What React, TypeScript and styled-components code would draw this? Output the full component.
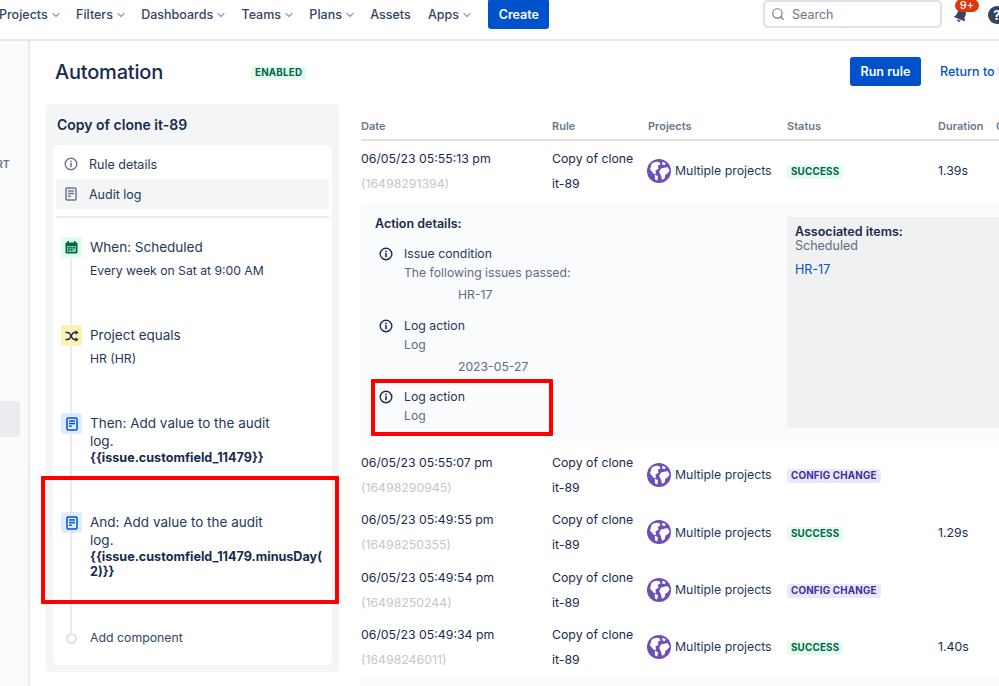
import React from 'react';
import styled, { createGlobalStyle } from 'styled-components';
import { ChevronDown, Search as SearchIcon } from 'lucide-react';

const GlobalStyle = createGlobalStyle`
  html, body {
    margin: 0;
    padding: 0;
    background: #fff;
  }
  body {
    width: 999px;
    height: 686px;
    overflow: hidden;
    font-family: Inter, "Liberation Sans", sans-serif;
    font-size: 12.5px;
    color: #172b4d;
  }
`;

// Header
const Page = styled.div`
  position: relative;
  width: 999px;
  height: 686px;
  overflow: hidden;
`;

const Header = styled.header`
  display: flex;
  align-items: flex-start;
  height: 39px;
  border-bottom: 2px solid #e6e8ee;
`;

const Nav = styled.nav`
  display: flex;
  align-items: flex-start;
  height: 29px;
  margin-left: -1px;
  gap: 17.3px;
`;

const NavItem = styled.div`
  display: flex;
  align-items: center;
  height: 28px;
  font-size: 12.5px;
  font-weight: 500;
  color: #344563;
  white-space: nowrap;

  svg {
    margin: 1px -3px 0 2px;
    color: #97a0af;
  }
`;

const Button = styled.button`
  height: 29px;
  padding: 0;
  border: 0;
  border-radius: 3px;
  background: #0052cc;
  color: #fff;
  font: 600 12.5px Inter, "Liberation Sans", sans-serif;
`;

const CreateButton = styled(Button)`
  width: 61px;
  height: 30px;
  margin: -1px 0 0 1px;
`;

const RunButton = styled(Button)`
  flex: none;
  width: 71px;
`;

const Search = styled.div`
  display: flex;
  align-items: center;
  gap: 7px;
  width: 179px;
  height: 28px;
  margin-left: auto;
  padding-left: 6px;
  box-sizing: border-box;
  border: 2px solid #dfe1e6;
  border-radius: 5px;
  color: #6b778c;
  font-size: 12.5px;
`;

const Bell = styled.div`
  position: relative;
  width: 20px;
  height: 24px;
  margin-left: 11px;

  svg {
    display: block;
    margin-top: 7px;
  }
`;

const BellBadge = styled.span`
  position: absolute;
  left: 2px;
  top: -1px;
  width: 24px;
  height: 13px;
  border-radius: 7px;
  background: #de350b;
  color: #fff;
  font-size: 11px;
  font-weight: 500;
  line-height: 13px;
  text-align: center;
`;

const Help = styled.div`
  flex: none;
  width: 18px;
  height: 18px;
  margin: 6px -7px 0 15px;
  border-radius: 50%;
  background: #344563;
  color: #fff;
  font-size: 13px;
  font-weight: 700;
  line-height: 18px;
  text-align: center;
`;

// Page frame
const Body = styled.div`
  display: flex;
  height: 645px;
`;

const Rail = styled.aside`
  flex: none;
  width: 28px;
  border-right: 2px solid #ebecf0;
  background: #fafbfc;
  overflow: hidden;
`;

const RailLabel = styled.div`
  margin: 118px 0 0 -4px;
  font-size: 10.5px;
  font-weight: 600;
  line-height: 12px;
  color: #6b778c;
`;

const RailSelected = styled.div`
  width: 20px;
  height: 36px;
  margin-top: 230px;
  border-radius: 0 3px 3px 0;
  background: #ebecf0;
`;

const Main = styled.main`
  flex: 1;
  min-width: 0;
`;

const TitleBar = styled.div`
  display: flex;
  align-items: center;
  height: 63px;
  padding: 0 0 0 25px;
`;

const Title = styled.h1`
  width: 196px;
  margin: -2px 0 0;
  font-size: 20px;
  font-weight: 500;
  letter-spacing: -0.2px;
`;

const Lozenge = styled.span<{ $kind?: 'success' | 'config' }>`
  display: inline-block;
  padding: 0 4px;
  border-radius: 3px;
  background: ${(p) => (p.$kind === 'config' ? '#eae6ff' : '#e3fcef')};
  color: ${(p) => (p.$kind === 'config' ? '#403294' : '#006644')};
  font-size: 9.8px;
  font-weight: 700;
  line-height: 14px;
  letter-spacing: 0.2px;
  white-space: nowrap;
`;

const TitleActions = styled.div`
  display: flex;
  align-items: center;
  flex: none;
  gap: 19px;
  width: 179px;
  margin: -2px -30px 0 auto;
`;

const ReturnLink = styled.a`
  color: #0052cc;
  font-size: 12.5px;
  font-weight: 500;
  white-space: nowrap;
`;

const Columns = styled.div`
  display: flex;
  padding-left: 16px;
`;

// Rule panel
const RulePanel = styled.section`
  flex: none;
  width: 293px;
  height: 568px;
  box-sizing: border-box;
  padding: 0 7px;
  border-radius: 5px;
  background: #f4f5f7;
`;

const RuleName = styled.h2`
  margin: 0;
  padding-left: 4px;
  font-size: 14px;
  font-weight: 600;
  line-height: 41px;
`;

const RuleCard = styled.div`
  height: 520px;
  box-sizing: border-box;
  padding: 4px 3px;
  border-radius: 6px;
  background: #fff;
`;

const MenuRow = styled.div<{ $selected?: boolean }>`
  display: flex;
  align-items: center;
  height: 30px;
  padding-left: 8px;
  gap: 11px;
  border-radius: 3px;
  background: ${(p) => (p.$selected ? '#f4f5f7' : 'transparent')};
  font-size: 12.5px;
  color: #253858;

  svg {
    flex: none;
  }
`;

const Divider = styled.div`
  height: 2px;
  margin-top: 7px;
  background: #ebecf0;
`;

const StepList = styled.div`
  position: relative;
  padding: 19px 0 0 5px;

  &::before {
    content: '';
    position: absolute;
    left: 14px;
    top: 30px;
    height: 385px;
    width: 2px;
    background: #ebecf0;
  }
`;

const Step = styled.div<{ $height: number }>`
  position: relative;
  display: flex;
  gap: 8px;
  height: ${(p) => p.$height}px;
`;

const StepIcon = styled.div<{ $bg: string }>`
  flex: none;
  display: flex;
  align-items: center;
  justify-content: center;
  width: 21px;
  height: 21px;
  border-radius: 3px;
  background: ${(p) => p.$bg};
`;

const StepText = styled.div`
  min-width: 0;
  width: 234px;
`;

const StepTitle = styled.div`
  max-width: 195px;
  padding-top: 1px;
  font-size: 13.5px;
  line-height: 18px;
  color: #253858;
`;

const StepSub = styled.div`
  margin-top: 6px;
  font-size: 12.2px;
  line-height: 18px;
  color: #253858;
`;

const StepCode = styled.div`
  font-size: 12.6px;
  font-weight: 700;
  line-height: 15px;
  line-break: anywhere;
`;

const AddDot = styled.div`
  flex: none;
  width: 7px;
  height: 7px;
  margin: 6px 5px 0 5px;
  border: 2px solid #dfe1e6;
  border-radius: 50%;
  background: #fff;
`;

const AddLabel = styled.div`
  font-size: 12.3px;
  line-height: 21px;
  color: #344563;
`;

// Audit table
const Table = styled.section`
  flex: none;
  width: 650px;
  margin-left: 22px;
`;

const cols = '191px 96px 139px 151px 58px 1fr';

const HeadRow = styled.div`
  display: grid;
  grid-template-columns: ${cols};
  height: 37px;
  box-sizing: border-box;
  padding-top: 15px;
  margin-bottom: 1px;
  border-bottom: 2px solid #dfe1e6;
  font-size: 11px;
  font-weight: 600;
  line-height: 14px;
  color: #6b778c;
`;

const Row = styled.div`
  display: grid;
  grid-template-columns: ${cols};
  align-items: center;
  height: 57.3px;
  font-size: 12.3px;
  line-height: 25px;
`;

const IdText = styled.div`
  color: #c1c7d0;
`;

const ProjectCell = styled.div`
  display: flex;
  align-items: center;
  gap: 4px;
  margin-left: -1px;
  white-space: nowrap;
  color: #253858;

  svg {
    flex: none;
  }
`;

const Details = styled.div`
  display: flex;
  height: 238px;
  margin: 4px 0 5px;
  background: #fafbfc;
`;

const DetailsLeft = styled.div`
  flex: none;
  width: 426px;
  box-sizing: border-box;
  padding: 13px 0 0 14px;
`;

const DetailsHead = styled.div`
  font-size: 12.5px;
  font-weight: 600;
  line-height: 16px;
  margin-bottom: 12px;
`;

const LogEntry = styled.div`
  display: flex;
  gap: 11px;
  height: 71.5px;
  padding-left: 4px;

  svg {
    flex: none;
    margin-top: 3px;
  }
`;

const LogTitle = styled.div`
  font-size: 12.3px;
  line-height: 20px;
  color: #253858;
`;

const LogSub = styled.div`
  font-size: 12.2px;
  line-height: 18px;
  color: #5e6c84;
`;

const LogValue = styled.div`
  margin: 3px 0 0 54px;
  font-size: 12.2px;
  line-height: 19px;
  color: #5e6c84;
`;

const Associated = styled.div`
  flex: 1;
  margin: 14px 0 13px;
  padding: 7px 8px;
  background: #f0f1f3;
`;

const AssocHead = styled.div`
  font-size: 12.5px;
  font-weight: 600;
  line-height: 15px;
`;

const AssocSub = styled.div`
  font-size: 12.5px;
  line-height: 13px;
  color: #5e6c84;
`;

const AssocLink = styled.a`
  display: block;
  margin-top: 10px;
  font-size: 12.5px;
  line-height: 16px;
  color: #0052cc;
`;

const NextDetails = styled.div`
  height: 14px;
  margin-top: 1px;
  background: #fafbfc;
`;

const Annotation = styled.div<{ $x: number; $y: number; $w: number; $h: number }>`
  position: absolute;
  left: ${(p) => p.$x}px;
  top: ${(p) => p.$y}px;
  width: ${(p) => p.$w}px;
  height: ${(p) => p.$h}px;
  box-sizing: border-box;
  border: 4px solid #fe0000;
  border-radius: 1px;
`;

// Icons
const InfoIcon = ({ color = '#172b4d' }: { color?: string }) => (
  <svg width="14" height="14" viewBox="0 0 14 14" fill="none">
    <circle cx="7" cy="7" r="5.8" stroke={color} strokeWidth="1.4" />
    <circle cx="7" cy="4.4" r="0.9" fill={color} />
    <rect x="6.2" y="6" width="1.6" height="4.2" rx="0.5" fill={color} />
  </svg>
);

const DocIcon = ({ color }: { color: string }) => (
  <svg width="14" height="14" viewBox="-1 0 14 14" fill="none">
    <rect x="1" y="1" width="10" height="12" rx="1" stroke={color} strokeWidth="1.5" />
    <rect x="3" y="3.2" width="6" height="1.5" fill={color} />
    <rect x="3" y="5.8" width="6" height="1.5" fill={color} />
    <rect x="3" y="8.4" width="2.8" height="1.5" fill={color} />
  </svg>
);

const CalendarIcon = () => (
  <svg width="13" height="13" viewBox="0 0 13 13">
    <rect x="2.4" y="0" width="1.6" height="3" fill="#006644" />
    <rect x="9" y="0" width="1.6" height="3" fill="#006644" />
    <rect x="0.5" y="1.5" width="12" height="11" rx="1" fill="#006644" />
    <rect x="2" y="5" width="9" height="6" fill="#79c7a4" />
    <rect x="3" y="6" width="1.8" height="1.5" fill="#006644" />
    <rect x="5.6" y="6" width="1.8" height="1.5" fill="#006644" />
    <rect x="8.2" y="6" width="1.8" height="1.5" fill="#006644" />
    <rect x="3" y="8.3" width="1.8" height="1.5" fill="#006644" />
    <rect x="5.6" y="8.3" width="1.8" height="1.5" fill="#006644" />
  </svg>
);

const BranchIcon = () => (
  <svg width="14" height="12" viewBox="0 0 14 12" fill="none">
    <path d="M0.5 2.5h2.600c2.600 0 3.400 7 6 7h2" stroke="#172b4d" strokeWidth="1.4" />
    <path d="M0.5 9.5h2.600c2.600 0 3.400-7 6-7h2" stroke="#172b4d" strokeWidth="1.4" />
    <path d="M10.5 0.2l3 2.300-3 2.300zM10.5 7.2l3 2.300-3 2.300z" fill="#172b4d" />
  </svg>
);

const BellIcon = () => (
  <svg width="16" height="16" viewBox="0 0 18 18">
    <path
      d="M9 2c-3 0-4.800 2.300-4.800 5v4L2.500 13v1h13v-1l-1.700-2V7C13.800 4.300 12 2 9 2zM7 15a2 2 0 0 0 4 0z"
      fill="#344563"
      transform="rotate(22 9 9)"
    />
  </svg>
);

const GlobeIcon = () => (
  <svg width="24" height="24" viewBox="0 0 24 24">
    <circle cx="12" cy="12" r="12" fill="#6e4fb5" />
    <path
      d="M4.500 5C7 2.800 10 2 12.500 3.200L13.500 5.500 10.800 6.800 11.500 9.800 8.500 11.500 9 14.800 7 15 3 10.500z"
      fill="#fff"
    />
    <path d="M14 9.500L20.500 8 22.800 11.500 20.500 14.500 18.500 15.500 17.500 19.500 15 20.800 14 16.500 12.200 13z" fill="#fff" />
    <path d="M15.500 2.800L18.800 4.200 17.500 6.300 15.200 5.300z" fill="#fff" />
    <path d="M7.800 15.500L11 17.300 10.200 21.500 8 20.500z" fill="#fff" />
  </svg>
);

const navItems = [
  { label: 'Projects', menu: true },
  { label: 'Filters', menu: true },
  { label: 'Dashboards', menu: true },
  { label: 'Teams', menu: true },
  { label: 'Plans', menu: true },
  { label: 'Assets', menu: false },
  { label: 'Apps', menu: true },
];

interface LogRow {
  date: string;
  id: string;
  status: 'success' | 'config';
  duration?: string;
}

const logRows: LogRow[] = [
  { date: '06/05/23 05:55:07 pm', id: '(16498290945)', status: 'config' },
  { date: '06/05/23 05:49:55 pm', id: '(16498250355)', status: 'success', duration: '1.29s' },
  { date: '06/05/23 05:49:54 pm', id: '(16498250244)', status: 'config' },
  { date: '06/05/23 05:49:34 pm', id: '(16498246011)', status: 'success', duration: '1.40s' },
];

const AuditRow: React.FC<LogRow> = ({ date, id, status, duration }) => (
  <Row>
    <div>
      <div>{date}</div>
      <IdText>{id}</IdText>
    </div>
    <div>
      Copy of clone
      <br />
      it-89
    </div>
    <ProjectCell>
      <GlobeIcon />
      Multiple projects
    </ProjectCell>
    <div>
      <Lozenge $kind={status}>{status === 'config' ? 'CONFIG CHANGE' : 'SUCCESS'}</Lozenge>
    </div>
    <div>{duration}</div>
  </Row>
);

const App: React.FC = () => {
  return (
    <Page>
      <GlobalStyle />
      <Header>
        <Nav>
          {navItems.map((item) => (
            <NavItem key={item.label}>
              {item.label}
              {item.menu && <ChevronDown size={12} strokeWidth={2.5} />}
            </NavItem>
          ))}
          <CreateButton>Create</CreateButton>
        </Nav>
        <Search>
          <SearchIcon size={14} strokeWidth={2} />
          Search
        </Search>
        <Bell>
          <BellIcon />
          <BellBadge>9+</BellBadge>
        </Bell>
        <Help>?</Help>
      </Header>

      <Body>
        <Rail>
          <RailLabel>RT</RailLabel>
          <RailSelected />
        </Rail>
        <Main>
          <TitleBar>
            <Title>Automation</Title>
            <Lozenge>ENABLED</Lozenge>
            <TitleActions>
              <RunButton>Run rule</RunButton>
              <ReturnLink>Return to list</ReturnLink>
            </TitleActions>
          </TitleBar>

          <Columns>
            <RulePanel>
              <RuleName>Copy of clone it-89</RuleName>
              <RuleCard>
                <MenuRow>
                  <InfoIcon color="#6b778c" />
                  Rule details
                </MenuRow>
                <MenuRow $selected>
                  <DocIcon color="#6b778c" />
                  Audit log
                </MenuRow>
                <Divider />
                <StepList>
                  <Step $height={88}>
                    <StepIcon $bg="#e3fcef">
                      <CalendarIcon />
                    </StepIcon>
                    <StepText>
                      <StepTitle>When: Scheduled</StepTitle>
                      <StepSub>Every week on Sat at 9:00 AM</StepSub>
                    </StepText>
                  </Step>
                  <Step $height={88}>
                    <StepIcon $bg="#fff0b3">
                      <BranchIcon />
                    </StepIcon>
                    <StepText>
                      <StepTitle>Project equals</StepTitle>
                      <StepSub>HR (HR)</StepSub>
                    </StepText>
                  </Step>
                  <Step $height={99}>
                    <StepIcon $bg="#deebff">
                      <DocIcon color="#0052cc" />
                    </StepIcon>
                    <StepText>
                      <StepTitle>Then: Add value to the audit log.</StepTitle>
                      <StepCode>{'{{issue.customfield_11479}}'}</StepCode>
                    </StepText>
                  </Step>
                  <Step $height={115}>
                    <StepIcon $bg="#deebff">
                      <DocIcon color="#0052cc" />
                    </StepIcon>
                    <StepText>
                      <StepTitle>And: Add value to the audit log.</StepTitle>
                      <StepCode>{'{{issue.customfield_11479.minusDay(2)}}'}</StepCode>
                    </StepText>
                  </Step>
                  <Step $height={21}>
                    <AddDot />
                    <AddLabel>Add component</AddLabel>
                  </Step>
                </StepList>
              </RuleCard>
            </RulePanel>

            <Table>
              <HeadRow>
                <div>Date</div>
                <div>Rule</div>
                <div>Projects</div>
                <div>Status</div>
                <div>Duration</div>
                <div>Category</div>
              </HeadRow>
              <AuditRow
                date="06/05/23 05:55:13 pm"
                id="(16498291394)"
                status="success"
                duration="1.39s"
              />
              <Details>
                <DetailsLeft>
                  <DetailsHead>Action details:</DetailsHead>
                  <LogEntry>
                    <InfoIcon />
                    <div>
                      <LogTitle>Issue condition</LogTitle>
                      <LogSub>The following issues passed:</LogSub>
                      <LogValue>HR-17</LogValue>
                    </div>
                  </LogEntry>
                  <LogEntry>
                    <InfoIcon />
                    <div>
                      <LogTitle>Log action</LogTitle>
                      <LogSub>Log</LogSub>
                      <LogValue>2023-05-27</LogValue>
                    </div>
                  </LogEntry>
                  <LogEntry>
                    <InfoIcon />
                    <div>
                      <LogTitle>Log action</LogTitle>
                      <LogSub>Log</LogSub>
                    </div>
                  </LogEntry>
                </DetailsLeft>
                <Associated>
                  <AssocHead>Associated items:</AssocHead>
                  <AssocSub>Scheduled</AssocSub>
                  <AssocLink>HR-17</AssocLink>
                </Associated>
              </Details>
              {logRows.map((row) => (
                <AuditRow key={row.id} {...row} />
              ))}
              <NextDetails />
            </Table>
          </Columns>
        </Main>
      </Body>

      <Annotation $x={41} $y={476} $w={298} $h={128} />
      <Annotation $x={371} $y={379} $w={182} $h={57} />
    </Page>
  );
};

export default App;
